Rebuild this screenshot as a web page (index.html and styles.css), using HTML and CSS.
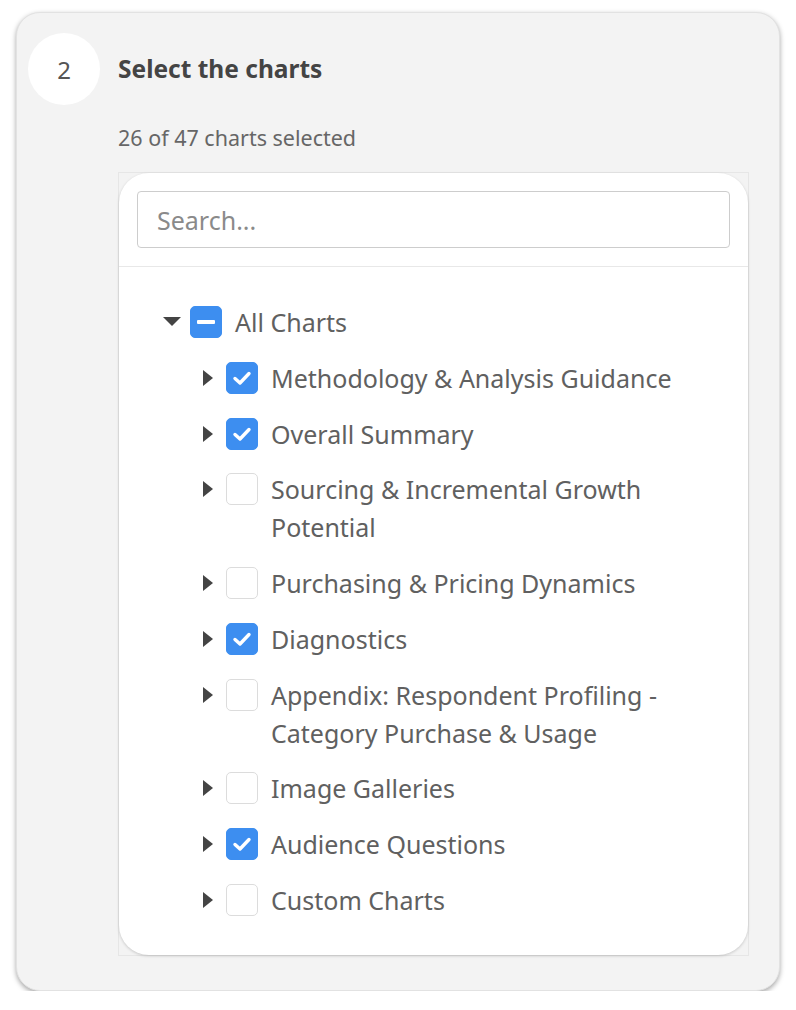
FILE: index.html
```html
<!DOCTYPE html>
<html lang="en">
<head>
    <meta charset="UTF-8">
    <meta name="viewport" content="width=device-width, initial-scale=1.0">
    <title>Select the charts</title>
    <link rel="stylesheet" href="styles.css">
</head>
<body>

    <div class="step-card">
        <div class="step-head">
            <div class="step-number">2</div>
            <h2>Select the charts</h2>
        </div>

        <div class="step-body">
            <p class="selected-count">26 of 47 charts selected</p>

            <div class="tree-frame">
                <div class="tree-panel">
                    <div class="search-wrap">
                        <input type="text" class="search" placeholder="Search...">
                    </div>

                    <ul class="tree">
                        <li>
                            <div class="node">
                                <span class="caret">
                                    <svg width="18" height="10" viewBox="0 0 18 10"><path d="M0 0 L18 0 L9 9 Z" fill="#444"/></svg>
                                </span>
                                <span class="box partial"><span class="dash"></span></span>
                                <span class="label">All Charts</span>
                            </div>

                            <ul class="children">
                                <li class="node">
                                    <span class="caret"><svg width="10" height="16" viewBox="0 0 10 16"><path d="M0 0 L10 8 L0 16 Z" fill="#444"/></svg></span>
                                    <span class="box checked"><svg width="20" height="16" viewBox="0 0 20 16"><path d="M3 8.5 L8 13 L17 3.5" fill="none" stroke="#fff" stroke-width="3.4" stroke-linecap="round" stroke-linejoin="round"/></svg></span>
                                    <span class="label">Methodology &amp; Analysis Guidance</span>
                                </li>
                                <li class="node">
                                    <span class="caret"><svg width="10" height="16" viewBox="0 0 10 16"><path d="M0 0 L10 8 L0 16 Z" fill="#444"/></svg></span>
                                    <span class="box checked"><svg width="20" height="16" viewBox="0 0 20 16"><path d="M3 8.5 L8 13 L17 3.5" fill="none" stroke="#fff" stroke-width="3.4" stroke-linecap="round" stroke-linejoin="round"/></svg></span>
                                    <span class="label">Overall Summary</span>
                                </li>
                                <li class="node">
                                    <span class="caret"><svg width="10" height="16" viewBox="0 0 10 16"><path d="M0 0 L10 8 L0 16 Z" fill="#444"/></svg></span>
                                    <span class="box"></span>
                                    <span class="label">Sourcing &amp; Incremental Growth Potential</span>
                                </li>
                                <li class="node">
                                    <span class="caret"><svg width="10" height="16" viewBox="0 0 10 16"><path d="M0 0 L10 8 L0 16 Z" fill="#444"/></svg></span>
                                    <span class="box"></span>
                                    <span class="label">Purchasing &amp; Pricing Dynamics</span>
                                </li>
                                <li class="node">
                                    <span class="caret"><svg width="10" height="16" viewBox="0 0 10 16"><path d="M0 0 L10 8 L0 16 Z" fill="#444"/></svg></span>
                                    <span class="box checked"><svg width="20" height="16" viewBox="0 0 20 16"><path d="M3 8.5 L8 13 L17 3.5" fill="none" stroke="#fff" stroke-width="3.4" stroke-linecap="round" stroke-linejoin="round"/></svg></span>
                                    <span class="label">Diagnostics</span>
                                </li>
                                <li class="node">
                                    <span class="caret"><svg width="10" height="16" viewBox="0 0 10 16"><path d="M0 0 L10 8 L0 16 Z" fill="#444"/></svg></span>
                                    <span class="box"></span>
                                    <span class="label">Appendix: Respondent Profiling - Category Purchase &amp; Usage</span>
                                </li>
                                <li class="node">
                                    <span class="caret"><svg width="10" height="16" viewBox="0 0 10 16"><path d="M0 0 L10 8 L0 16 Z" fill="#444"/></svg></span>
                                    <span class="box"></span>
                                    <span class="label">Image Galleries</span>
                                </li>
                                <li class="node">
                                    <span class="caret"><svg width="10" height="16" viewBox="0 0 10 16"><path d="M0 0 L10 8 L0 16 Z" fill="#444"/></svg></span>
                                    <span class="box checked"><svg width="20" height="16" viewBox="0 0 20 16"><path d="M3 8.5 L8 13 L17 3.5" fill="none" stroke="#fff" stroke-width="3.4" stroke-linecap="round" stroke-linejoin="round"/></svg></span>
                                    <span class="label">Audience Questions</span>
                                </li>
                                <li class="node">
                                    <span class="caret"><svg width="10" height="16" viewBox="0 0 10 16"><path d="M0 0 L10 8 L0 16 Z" fill="#444"/></svg></span>
                                    <span class="box"></span>
                                    <span class="label">Custom Charts</span>
                                </li>
                            </ul>
                        </li>
                    </ul>
                </div>
            </div>
        </div>
    </div>

</body>
</html>
```

FILE: styles.css
```css
/* General Reset */
* { margin: 0; padding: 0; box-sizing: border-box; }
body {
    font-family: "Noto Sans", "Open Sans", sans-serif;
    background: white;
    color: #555;
    padding: 12px 16px 0 16px;
}
.step-card {
    width: 764px;
    background: #f3f3f3;
    border: 1px solid #e2e2e2;
    border-radius: 24px;
    padding: 20px 30px 34px 11px;
    box-shadow: 0 2px 5px rgba(0, 0, 0, 0.35);
}
.step-head {
    display: flex;
    align-items: center;
    gap: 18px;
}
.step-number {
    width: 72px;
    height: 72px;
    border-radius: 50%;
    background: white;
    display: flex;
    justify-content: center;
    align-items: center;
    font-size: 24px;
    color: #555;
}
h2 { font-size: 24.5px; font-weight: 700; color: #444; line-height: 32px; }
.step-body { padding-left: 90px; }
.selected-count {
    font-size: 21.5px;
    color: #666;
    margin-top: 18px;
    line-height: 30px;
}
.tree-frame {
    margin-top: 19px;
    border: 1px solid #e6e6e6;
}
.tree-panel {
    background: white;
    border-radius: 30px;
    box-shadow: 0 1px 3px rgba(0, 0, 0, 0.18);
}
.search-wrap {
    padding: 18px;
    border-bottom: 1px solid #e8e8e8;
}
.search {
    width: 100%;
    height: 57px;
    border: 1px solid #cdcdcd;
    border-radius: 4px;
    padding: 0 19px;
    font-family: inherit;
    font-size: 25px;
    color: #555;
}
.search::placeholder { color: #8a8a8a; }
.tree {
    list-style: none;
    padding: 36px 40px 36px 41px;
}
.children {
    list-style: none;
    padding-left: 36px;
}
.node {
    display: flex;
    align-items: flex-start;
    margin-top: 17.75px;
}
.tree > li > .node { margin-top: 0; }
.caret {
    flex: 0 0 24px;
    height: 38px;
    display: flex;
    justify-content: center;
    align-items: center;
}
.box {
    flex: 0 0 32px;
    height: 32px;
    margin: 3px 13px 0 6px;
    border: 1px solid #dcdcdc;
    border-radius: 5px;
    background: white;
    display: flex;
    justify-content: center;
    align-items: center;
}
.box.checked, .box.partial {
    background: #3d8ef0;
    border-color: #3d8ef0;
}
.dash {
    width: 18px;
    height: 4px;
    background: white;
    border-radius: 1px;
}
.label {
    font-size: 25px;
    line-height: 38px;
    color: #606060;
}
```
